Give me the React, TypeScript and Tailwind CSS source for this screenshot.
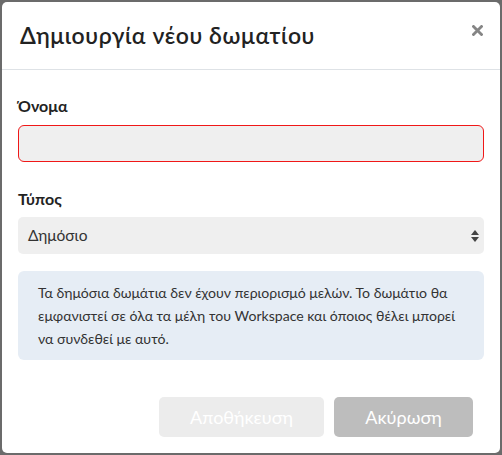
export default function App() {
  return (
    <div className="w-[502px] h-[455px] bg-[#6b6b6b] p-[2px] font-['Lato','Open_Sans',sans-serif]">
      <div className="h-[451px] w-[498px] bg-white rounded-[5px] flex flex-col">
        {/* Header */}
        <div className="flex items-center justify-between h-[68px] px-[18px] border-b border-[#dee2e6]">
          <h2 className="text-[23px] font-semibold text-[#222] tracking-[0.6px]">
            Δημιουργία νέου δωματίου
          </h2>
          <button className="text-[#858585] -mt-[10px] -mr-[1px]">
            <svg width="11" height="11" viewBox="0 0 11 11">
              <path d="M1.5 1.5 L9.5 9.5 M9.5 1.5 L1.5 9.5" stroke="currentColor" strokeWidth="2.8" strokeLinecap="square" />
            </svg>
          </button>
        </div>

        {/* Body */}
        <div className="px-[16px] pt-[26px] flex flex-col">
          <label className="text-[16px] font-bold text-[#222] leading-[20px]">Όνομα</label>
          <input
            className="mt-[9px] h-[37px] w-full bg-[#efefef] border border-[#f01818] rounded-[6px] outline-none"
          />

          <label className="mt-[27px] text-[16px] font-bold text-[#222] leading-[20px]">Τύπος</label>
          <div className="mt-[8px] h-[37px] w-full bg-[#efefef] rounded-[5px] flex items-center justify-between pl-[10px] pr-[4px]">
            <span className="text-[15.5px] text-[#333]">Δημόσιο</span>
            <svg width="10" height="16" viewBox="0 0 10 16" className="text-[#444]">
              <path d="M5 2 L9 7 L1 7 Z" fill="currentColor" />
              <path d="M5 14 L9 9 L1 9 Z" fill="currentColor" />
            </svg>
          </div>

          <div className="mt-[17px] bg-[#e6edf5] rounded-[6px] px-[20px] py-[10px] text-[14.1px] leading-[23px] text-[#333]">
            Τα δημόσια δωμάτια δεν έχουν περιορισμό μελών. Το δωμάτιο θα εμφανιστεί σε όλα τα μέλη του Workspace και όποιος θέλει μπορεί να συνδεθεί με αυτό.
          </div>
        </div>

        {/* Footer */}
        <div className="mt-auto mb-[16px] flex justify-end gap-[10px] pr-[27px]">
          <button className="w-[165px] h-[40px] rounded-[5px] bg-[#ececec] text-white text-[18px]">
            Αποθήκευση
          </button>
          <button className="w-[139px] h-[40px] rounded-[5px] bg-[#bdbdbd] text-white text-[18px]">
            Ακύρωση
          </button>
        </div>
      </div>
    </div>
  );
}
